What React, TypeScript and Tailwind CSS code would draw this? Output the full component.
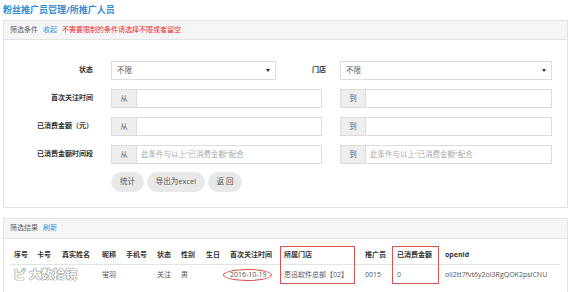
import React from 'react'

const font = { fontFamily: '"Open Sans","Noto Sans CJK SC",sans-serif' }

function Caret() {
    return <span className="ml-auto mr-[5px] h-0 w-0 border-x-[2px] border-t-[3px] border-x-transparent border-t-[#333]"></span>
}

function SelectBox({ width }: { width: string }) {
    return (
        <div className={`flex h-[19px] ${width} items-center border border-[#dcdcdc] bg-white pl-[5px] text-[7.5px] text-[#555]`}>
            不限
            <Caret />
        </div>
    )
}

function InputGroup({ addon, width, placeholder }: { addon: string; width: string; placeholder?: string }) {
    return (
        <div className={`flex h-[19px] ${width} border border-[#dcdcdc] bg-white`}>
            <div className="flex w-[25px] items-center justify-center border-r border-[#dcdcdc] bg-[#eeeeee] text-[7.5px] text-[#666]">{addon}</div>
            <div className="flex flex-1 items-center pl-[4px] text-[7.5px] text-[#aaa]">{placeholder}</div>
        </div>
    )
}

function Row({ label, children }: { label: string; children: React.ReactNode }) {
    return (
        <div className="flex h-[19px] items-center">
            <div className="w-[89px] whitespace-nowrap text-right text-[7px] font-bold text-[#333]">{label}</div>
            <div className="ml-[18px] flex items-center">{children}</div>
        </div>
    )
}

const cols = [
    { h: '序号', w: 'w-[23px]', v: '' },
    { h: '卡号', w: 'w-[25px]', v: '' },
    { h: '真实姓名', w: 'w-[40px]', v: '' },
    { h: '昵称', w: 'w-[24px]', v: '蛍羽' },
    { h: '手机号', w: 'w-[31px]', v: '' },
    { h: '状态', w: 'w-[24px]', v: '关注' },
    { h: '性别', w: 'w-[25px]', v: '男' },
    { h: '生日', w: 'w-[24px]', v: '' },
    { h: '首次关注时间', w: 'w-[54px]', v: '2016-10-19' },
    { h: '所属门店', w: 'w-[81px]', v: '思迅软件总部【02】' },
    { h: '推广员', w: 'w-[32px]', v: '0015' },
    { h: '已消费金额', w: 'w-[48px]', v: '0' },
    { h: 'openid', w: 'w-[115px]', v: 'oii2tt7fvt6y2oi3RgQOK2psICNU' },
]

export default function App() {
    return (
        <div className="h-[292px] w-[571px] overflow-hidden bg-white" style={font}>
            <div className="flex h-[20px] items-center pl-[3px] pb-[1px] text-[9px] font-bold text-[#2e8bd4]">
                粉丝推广员管理/所推广人员
            </div>

            {/* filter panel */}
            <div className="mx-[3px] border border-[#e3e3e3]">
                <div className="flex h-[19px] items-center gap-[5px] border-b border-[#e3e3e3] bg-[#f5f5f5] pl-[6px] text-[7px]">
                    <span className="text-[#666]">筛选条件</span>
                    <span className="text-[#3a8fd6]">收起</span>
                    <span className="text-[#ee2a2a]">不需要限制的条件请选择不限或者留空</span>
                </div>
                <div className="flex flex-col gap-[9px] pt-[21px] pb-[15px]">
                    <div className="flex h-[19px] items-center">
                        <div className="w-[89px] text-right text-[7px] font-bold text-[#333]">状态</div>
                        <div className="ml-[18px] w-[211px]">
                            <SelectBox width="w-[165px]" />
                        </div>
                        <div className="flex w-[18px] justify-end whitespace-nowrap pr-[14px] text-[7px] font-bold text-[#333]">门店</div>
                        <SelectBox width="w-[212px]" />
                    </div>
                    <Row label="首次关注时间">
                        <InputGroup addon="从" width="w-[211px]" />
                        <div className="w-[18px]"></div>
                        <InputGroup addon="到" width="w-[212px]" />
                    </Row>
                    <Row label="已消费金额（元）">
                        <InputGroup addon="从" width="w-[211px]" />
                        <div className="w-[18px]"></div>
                        <InputGroup addon="到" width="w-[212px]" />
                    </Row>
                    <Row label="已消费金额时间段">
                        <InputGroup addon="从" width="w-[211px]" placeholder="此条件与以上“已消费金额”配合" />
                        <div className="w-[18px]"></div>
                        <InputGroup addon="到" width="w-[212px]" placeholder="此条件与以上“已消费金额”配合" />
                    </Row>
                    <div className="ml-[107px] mt-[-1px] flex h-[20px] gap-[3px] text-[7.5px] text-[#555]">
                        <div className="flex w-[33px] items-center justify-center rounded-[10px] bg-[#e8e8e8]">统计</div>
                        <div className="flex w-[58px] items-center justify-center rounded-[10px] bg-[#e8e8e8]">导出为excel</div>
                        <div className="flex w-[34px] items-center justify-center rounded-[10px] bg-[#e8e8e8]">返 回</div>
                    </div>
                </div>
            </div>

            {/* result panel */}
            <div className="mx-[3px] mt-[10px] h-[100px] border border-[#e3e3e3]">
                <div className="flex h-[20px] items-center gap-[5px] border-b border-[#e3e3e3] bg-[#f5f5f5] pl-[6px] text-[7px]">
                    <span className="text-[#666]">筛选结果</span>
                    <span className="text-[#3a8fd6]">刷新</span>
                </div>
                <div className="relative ml-[6px] w-[550px] pt-[7px]">
                    <div className="flex h-[19px] items-center border-b border-[#e3e3e3] text-[7px] font-bold text-[#333]">
                        {cols.map((c) => (
                            <div key={c.h} className={`${c.w} shrink-0 whitespace-nowrap pl-[4px]`}>{c.h}</div>
                        ))}
                    </div>
                    <div className="flex h-[20px] items-center text-[7px] text-[#555]">
                        {cols.map((c) => (
                            <div key={c.h} className={`${c.w} shrink-0 whitespace-nowrap pl-[4px]`}>{c.v}</div>
                        ))}
                    </div>

                    {/* annotations */}
                    <div className="absolute left-[270px] top-[7px] h-[38px] w-[75px] border border-[#d9534f]"></div>
                    <div className="absolute left-[382px] top-[7px] h-[38px] w-[47px] border border-[#d9534f]"></div>
                    <div className="absolute left-[213px] top-[30px] h-[12px] w-[49px] rounded-[50%] border border-[#d9534f]"></div>

                    <div className="absolute left-[3px] top-[26px] flex items-center gap-[3px] text-[12px] font-bold text-white" style={{ textShadow: '0 0 1px #777, 0 0 1px #777, 0 0 1px #777' }}>
                        <span className="text-[13px]">ピ</span>
                        <span>大数拾镜</span>
                    </div>
                </div>
            </div>
        </div>
    )
}
